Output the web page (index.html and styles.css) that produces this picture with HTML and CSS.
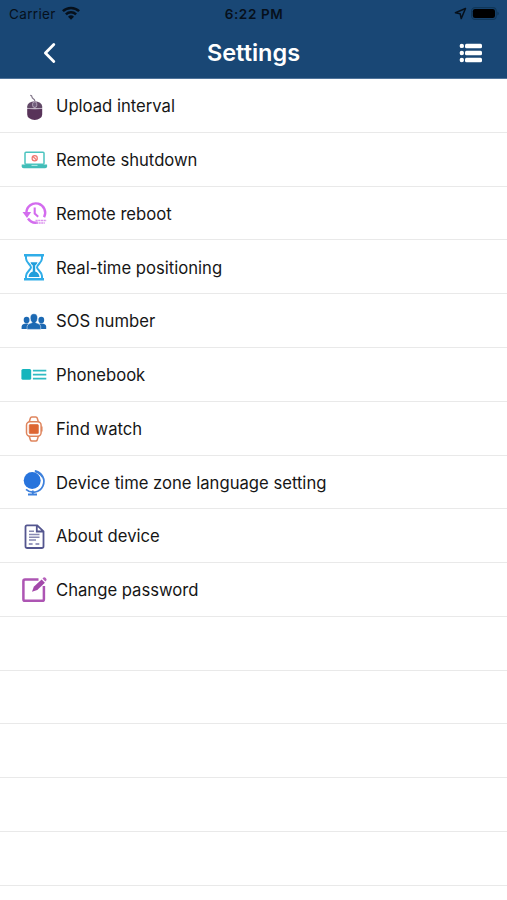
FILE: index.html
```html
<!DOCTYPE html>
<html lang="en">
<head>
<meta charset="utf-8">
<title>Settings</title>
<link rel="stylesheet" href="styles.css">
</head>
<body>
<header class="header">
  <div class="status">
    <div class="status-left"><span class="carrier">Carrier</span>
      <svg class="wifi" width="18" height="14" viewBox="0 0 18 14" fill="none" stroke="#06101b" stroke-width="2.5"><path d="M.9 5.2a11.6 11.6 0 0 1 16.2 0M3.9 8.4a7.3 7.3 0 0 1 10.2 0"/><path d="M9 13.8 6 10.8a4.3 4.3 0 0 1 6 0z" fill="#06101b" stroke="none"/></svg>
    </div>
    <span class="clock">6:22 PM</span>
    <div class="status-right">
      <svg width="13" height="13" viewBox="0 0 13 13" fill="none" stroke="#06101b" stroke-width="1.5" stroke-linejoin="round"><path d="M11.5 1.5 1.4 5.8l4.8 1 1 4.8z"/></svg>
      <svg width="28" height="13" viewBox="0 0 28 13"><rect x=".6" y=".6" width="24.6" height="11.8" rx="3.5" fill="none" stroke="#103759" stroke-width="1.1"/><rect x="1.8" y="2" width="22.2" height="9" rx="2.2" fill="#000"/><path d="M26.300 4.500q1.500.6 1.500 2t-1.500 2z" fill="#103759"/></svg>
    </div>
  </div>
  <div class="nav">
    <svg class="back" width="14" height="22" viewBox="0 0 14 22" fill="none" stroke="#fff" stroke-width="2.8" stroke-linecap="round" stroke-linejoin="round"><path d="M10.800 2.500 2.400 11l8.400 8.500"/></svg>
    <h1 class="title">Settings</h1>
    <svg class="menu" width="24" height="20" viewBox="0 0 24 20" fill="#fff"><circle cx="2.800" cy="2.900" r="2.200"/><circle cx="2.800" cy="10" r="2.200"/><circle cx="2.800" cy="17" r="2.200"/><rect x="6" y=".7" width="17" height="4.500" rx="1.500"/><rect x="6" y="7.800" width="17" height="4.500" rx="1.500"/><rect x="6" y="14.800" width="17" height="4.500" rx="1.500"/></svg>
  </div>
</header>
<ul class="list">
  <li class="row"><svg class="icon" viewBox="0 0 28 28"><path d="M14.700 11V8.500c0-2-2.700-1.700-2.700-3.500 0-1-1.200-1.600-1.800-1.600" fill="none" stroke="#82768a" stroke-width="1.200"/><path d="M7.200 16v-1.500a7.500 5.300 0 0 1 15 0V16z" fill="#624967"/><path d="M7.200 16.800h15v5.600a7.500 5.600 0 0 1-15 0z" fill="#583359"/><path d="M14.700 9v7M7.400 16.400q7.400 1.200 14.800 0" fill="none" stroke="#af9fb4" stroke-width=".8"/><rect x="12.600" y="9.800" width="4.200" height="5.600" rx="2" fill="#715e7b" stroke="#c5b8c9" stroke-width=".8"/></svg><span>Upload interval</span></li>
  <li class="row"><svg class="icon" viewBox="0 0 28 28"><rect x="5" y="7.200" width="19" height="12" rx="1" fill="#fff" stroke="#4bc4bf" stroke-width="1.500"/><path d="M1.700 19.400h25.400v1.800q0 2-2 2H3.700q-2 0-2-2z" fill="#42bdb8"/><path d="M11.500 20.400h6" stroke="#b5eee9" stroke-width="1"/><g fill="#fff2ef" stroke="#ef766f" stroke-width="1.200"><circle cx="14.700" cy="13.200" r="2.600"/><path d="m13 11.500 3.400 3.400"/></g></svg><span>Remote shutdown</span></li>
  <li class="row"><svg class="icon" viewBox="0 0 28 28" fill="none" stroke="#d36cee" stroke-width="2.400"><path d="M6.400 13.500a9.400 9.400 0 1 1 17.700 4.700M8 19.500a9.400 9.400 0 0 0 9.700 4"/><path d="M14.700 8.400v6.200l3.500 3.100" stroke-width="2.100"/><path d="M2.500 13h8.700l-4.200 6z" fill="#d36cee" stroke="none"/><path d="M15.500 21.500h11M15.800 24h9" stroke="#dc93ee" stroke-width="1.700" stroke-dasharray="2.200 .5"/></svg><span>Remote reboot</span></li>
  <li class="row"><svg class="icon" viewBox="0 0 28 28" fill="none" stroke="#30ade8" stroke-width="2"><path d="M4 2.300h20M4 26.300h20" stroke-width="2.400"/><path d="M6 3v2.500c0 4 5 6.400 5 8.800S6 19 6 23v3M22 3v2.500c0 4-5 6.400-5 8.800s5 4.700 5 8.700v3"/><path d="M10.500 9.200h7q-.3 1.800-2.300 3.300v6q3.800 1.400 4.300 5.500h-11q.5-4.100 4.300-5.500v-6q-2-1.500-2.300-3.300z" fill="#219edb" stroke="none"/></svg><span>Real-time positioning</span></li>
  <li class="row"><svg class="icon" viewBox="0 0 28 28" fill="#1c69b3"><ellipse cx="6.600" cy="13" rx="2.900" ry="3.300"/><ellipse cx="21.300" cy="13" rx="2.900" ry="3.300"/><path d="M1.600 22v-2.400q0-2 2-2.500l2-.7h2l2.500 1V22zM26.200 22v-2.400q0-2-2-2.500l-2-.7h-2l-2.500 1V22z"/><path d="M7.100 22.400v-2.700q0-2.300 2.500-3.100l2.600-1q-2-1.700-2-4.500 0-4.400 3.700-4.400t3.700 4.400q0 2.800-2 4.500l2.600 1q2.500.8 2.500 3.100v2.700z" stroke="#fff" stroke-width=".5"/></svg><span>SOS number</span></li>
  <li class="row"><svg class="icon" viewBox="0 0 28 28"><rect x="1.400" y="9" width="9.800" height="10.800" rx="1.600" fill="#16b5bd"/><path d="M12.900 10.600h13.400M12.900 14.600h13.400M12.900 18.700h13.400" stroke="#2fbbc3" stroke-width="1.800"/></svg><span>Phonebook</span></li>
  <li class="row"><svg class="icon" viewBox="0 0 28 28" fill="none" stroke="#df855d" stroke-width="1.500"><path d="m9.200 8 1.200-4q.3-1 1.400-1h4q1.100 0 1.400 1l1.200 4M9.200 22l1.200 4q.3 1 1.400 1h4q1.100 0 1.400-1l1.200-4"/><rect x="6.500" y="7.800" width="14.600" height="14.400" rx="3.400"/><path d="M21.800 12.500v5"/><rect x="9.300" y="10.600" width="9" height="9" rx=".7" fill="#dd6632" stroke="#e07549" stroke-width=".9"/></svg><span>Find watch</span></li>
  <li class="row"><svg class="icon" viewBox="0 0 28 28"><circle cx="12.200" cy="12.600" r="8.500" fill="#2874dc"/><path d="M14.800 2.900a10.700 10.700 0 1 1-8.800 18.500" fill="none" stroke="#3d80dc" stroke-width="1.700"/><path d="M15.600 2.500q7 2 7 9.500-1-5.400-7.500-7.800z" fill="#3d80dc"/><path d="M12.800 22.500v4M8 26.500h9" stroke="#3d80dc" stroke-width="1.800"/></svg><span>Device time zone language setting</span></li>
  <li class="row"><svg class="icon" viewBox="0 0 28 28" fill="none" stroke="#54568f" stroke-width="1.800"><path d="M7 3.300h10.200l6.300 6v14.900q0 1.800-1.800 1.800H7.300q-1.800 0-1.800-1.800V5q0-1.700 1.500-1.700zM16.800 3.500v6h6.500"/><path d="M9 9.300h5M9 12.400h10.500M9 15.200h10.500M9 18h7" stroke="#8889b2" stroke-width="1.500"/><path d="M8.800 22h3.800M15.500 22h3.800" stroke="#9a9bc0" stroke-width="2"/></svg><span>About device</span></li>
  <li class="row"><svg class="icon" viewBox="0 0 28 28"><path d="M18.500 4.600H5q-1.600 0-1.600 1.600v18q0 1.600 1.600 1.600h17.300q1.600 0 1.600-1.600V11" fill="none" stroke="#ad55b3" stroke-width="2.500"/><path d="m12 16.800 1.800-5 7.800-7.400 3.300 3.300-7.600 7.300z" fill="#a348aa"/><path d="m22.500 3.600 1-1q1-.8 2 .2l.6.600q1 1 .2 2l-1 1z" fill="#b660bb"/></svg><span>Change password</span></li>
  <li class="row"></li>
  <li class="row"></li>
  <li class="row"></li>
  <li class="row"></li>
  <li class="row"></li>
</ul>
</body>
</html>
```
FILE: styles.css
```css
* {
  box-sizing: border-box;
}

body {
  margin: 0;
  height: 900px;
  overflow: hidden;
  background: #fff;
  font-family: Inter, "Liberation Sans", sans-serif;
}

.header {
  height: 79px;
  background: #194775;
  border-bottom: 1px solid #50749a;
}

.status {
  display: grid;
  grid-template-columns: 1fr auto 1fr;
  align-items: center;
  height: 27px;
  padding: 0 8px 0 9px;
  color: #06101b;
  font-size: 13.5px;
}

.status-left,
.status-right {
  display: flex;
  align-items: center;
}

.status-left {
  gap: 6px;
}

.carrier {
  font-size: 13.5px;
  letter-spacing: 0.35px;
}

.wifi {
  margin-top: -2px;
}

.status-right {
  justify-content: flex-end;
  gap: 4px;
}

.clock {
  font-weight: 600;
  letter-spacing: 0.6px;
}

.nav {
  display: grid;
  grid-template-columns: 1fr auto 1fr;
  align-items: center;
  height: 51px;
  padding: 0 24px 0 43px;
}

.title {
  margin: 0 19px 0 0;
  color: #fff;
  font-size: 23.5px;
  font-weight: 600;
  line-height: 30px;
}

.menu {
  justify-self: end;
}

.list {
  margin: 0;
  padding: 0.2px 0 0;
  list-style: none;
}

.row {
  display: flex;
  align-items: center;
  gap: 8px;
  height: 53.77px;
  padding-left: 20px;
  border-bottom: 1px solid #e9e9e9;
  color: #161616;
  font-size: 16.65px;
}

.row span {
  padding-top: 1.4px;
}

.icon {
  flex: none;
  width: 28px;
  height: 28px;
}
```
